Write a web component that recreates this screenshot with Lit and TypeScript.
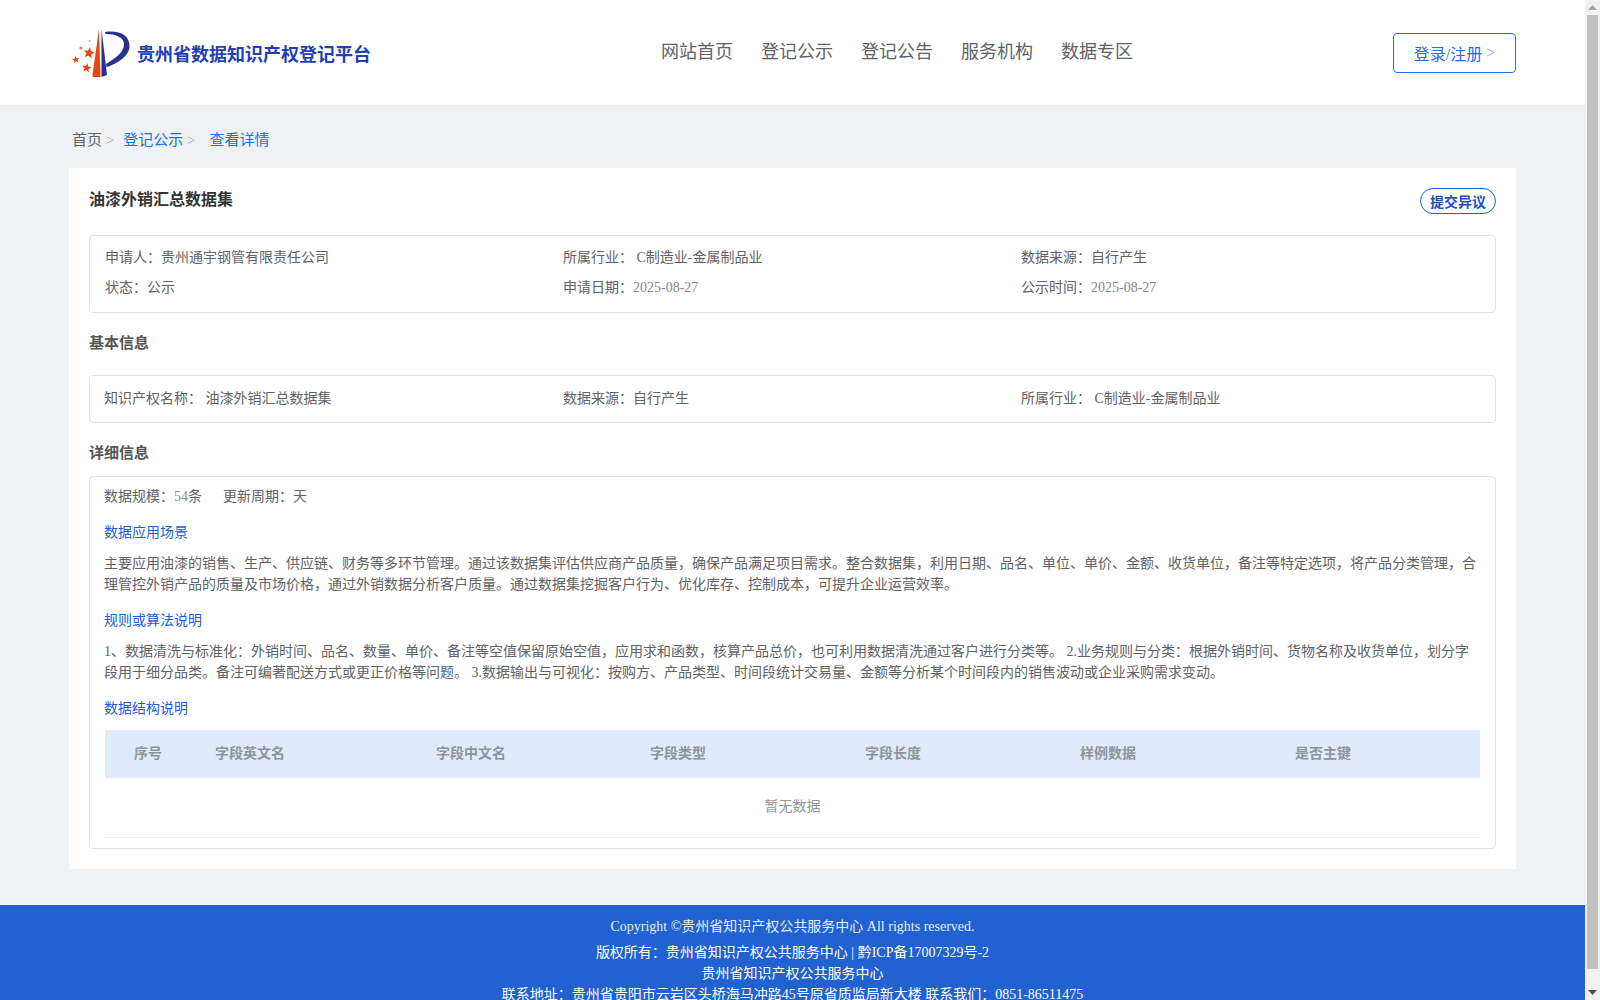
import { LitElement, html, css } from "lit";
import { customElement } from "lit/decorators.js";

const star = (cx: number, cy: number, r: number, rot = 0) => {
  const pts: string[] = [];
  for (let i = 0; i < 10; i++) {
    const rad = i % 2 === 0 ? r : r * 0.42;
    const a = (-90 + rot + i * 36) * Math.PI / 180;
    pts.push(`${(cx + rad * Math.cos(a)).toFixed(2)},${(cy + rad * Math.sin(a)).toFixed(2)}`);
  }
  return pts.join(" ");
};

@customElement("app-root")
export class AppRoot extends LitElement {
  static styles = css`
    :host { display: flex; width: 1600px; height: 1000px; overflow: hidden; font-family: "Liberation Serif", "Noto Sans CJK SC", serif; font-size: 14px; color: #606266; background: #eff2f5; }
    .page { width: 1585px; flex: none; height: 1000px; overflow: hidden; }
    .scroll { width: 15px; flex: none; background: #f1f1f1; display: flex; flex-direction: column; align-items: center; }
    .arrow { height: 15px; flex: none; display: flex; align-items: center; justify-content: center; }
    .thumb { width: 11px; height: 954px; flex: none; background: #c1c1c1; }
    .gap { flex: 1; }
    header { height: 105px; background: #fff; display: flex; align-items: center; padding: 0 69px 0 70px; }
    .brand { display: flex; align-items: center; width: 591px; flex: none; }
    .brand svg { flex: none; margin-right: 5px; }
    .brand b { font-size: 18px; color: #1f3fb3; }
    nav { display: flex; gap: 28px; font-size: 18px; color: #606266; flex: 1; margin-bottom: 5px; }
    .login { width: 123px; height: 40px; box-sizing: border-box; border: 1px solid #1f6fe5; border-radius: 4px; color: #1f6fe5; font-size: 16px; display: flex; align-items: center; justify-content: center; }
    .login .gt { margin-left: 4px; color: #7fa9f0; }
    .crumb { height: 63px; box-sizing: border-box; padding: 4px 0 0 72px; font-size: 15px; display: flex; align-items: center; }
    .crumb span.item { margin-right: 9px; }
    .crumb .gt { color: #a5adbb; }
    .crumb .b { color: #1a6fe8; }
    .crumb .b .gt { color: #7fa9f0; }
    .crumb .last { margin-left: 5px; }
    .l { color: #85878b; }
    .card { margin: 0 69px; height: 701px; box-sizing: border-box; background: #fff; padding: 20px; }
    .title { display: flex; justify-content: space-between; height: 47px; }
    .title h1 { margin: 0; padding-top: 1px; font-size: 16px; color: #333; line-height: 22px; }
    .dissent { width: 76px; height: 26px; box-sizing: border-box; border: 1px solid #1f5fd0; border-radius: 13px; font-weight: bold; color: #1e4fc0; display: flex; align-items: center; justify-content: center; }
    .box { border: 1px solid #e0e0e0; border-radius: 4px; box-sizing: border-box; }
    .info { height: 78px; padding: 5px 15px; display: grid; grid-template-columns: repeat(3, 458px); grid-auto-rows: 30px; align-items: center; }
    h2 { margin: 0; font-size: 15px; color: #555; font-weight: bold; line-height: 20px; }
    .h-a { margin-top: 20px; }
    .basic { margin-top: 22px; height: 48px; padding: 0 14px 4px; display: grid; grid-template-columns: 459px 458px 458px; align-items: center; }
    .h-b { margin-top: 20px; }
    .detail { margin-top: 13px; height: 373px; padding: 10px 14px 0; }
    .meta { line-height: 20px; display: flex; gap: 21px; }
    .sub { color: #1a5fd0; line-height: 20px; margin-top: 16px; }
    p { margin: 10px 0 0; line-height: 21px; }
    .table { margin: 11px 1px 0; }
    .thead { height: 48px; box-sizing: border-box; padding-bottom: 5px; background: #dfebfc; display: grid; grid-template-columns: 110px 221px 214px 215px 215px 215px 1fr; align-items: center; color: #909399; font-weight: bold; }
    .thead .first { padding-left: 29px; }
    .empty { height: 54px; padding-bottom: 5px; border-bottom: 1px solid #ebeef5; display: flex; align-items: center; justify-content: center; color: #909399; }
    footer { margin-top: 36px; background: #2161d0; color: #fff; text-align: center; padding-top: 11px; height: 120px; line-height: 21px; }
    footer .c { color: #e6eeff; margin-bottom: 5px; }
  `;

  render() {
    return html`
      <div class="page">
        <header>
          <div class="brand">
            <svg width="62" height="54" viewBox="70 26 62 54">
              <path d="M99 29 L100.5 77 L93 77 Q92 76 92.5 75 Z" fill="#e8450f"/>
              <path d="M101.5 29 L107 75 L101.5 77 Z" fill="#2a318c"/>
              <path d="M105 32 C118 30 130 34 129.5 47 C129 56 117 64 106.5 67 L106 64 C114 59 124 53 124 44 C124 37 115 34 105.5 34 Z" fill="#2a318c"/>
              <polygon points="${star(89, 53, 6, 10)}" fill="#e8450f"/>
              <polygon points="${star(75.8, 59.7, 3.8, -10)}" fill="#e8450f"/>
              <polygon points="${star(86.7, 68, 5, 10)}" fill="#e8450f"/>
              <circle cx="81" cy="48" r="1.6" fill="#ee7a50"/>
              <circle cx="89.5" cy="41" r="1.1" fill="#f2a080"/>
            </svg>
            <b>贵州省数据知识产权登记平台</b>
          </div>
          <nav><span>网站首页</span><span>登记公示</span><span>登记公告</span><span>服务机构</span><span>数据专区</span></nav>
          <div class="login">登录/注册<span class="gt">&gt;</span></div>
        </header>
        <div class="crumb"><span class="item">首页 <span class="gt">&gt;</span></span><span class="item b">登记公示 <span class="gt">&gt;</span></span><span class="item b last">查看详情</span></div>
        <section class="card">
          <div class="title"><h1>油漆外销汇总数据集</h1><div class="dissent">提交异议</div></div>
          <div class="box info">
            <div>申请人：贵州通宇钢管有限责任公司</div><div>所属行业： C制造业-金属制品业</div><div>数据来源：自行产生</div>
            <div>状态：公示</div><div>申请日期：<span class="l">2025-08-27</span></div><div>公示时间：<span class="l">2025-08-27</span></div>
          </div>
          <h2 class="h-a">基本信息</h2>
          <div class="box basic">
            <div>知识产权名称： 油漆外销汇总数据集</div><div>数据来源：自行产生</div><div>所属行业： C制造业-金属制品业</div>
          </div>
          <h2 class="h-b">详细信息</h2>
          <div class="box detail">
            <div class="meta"><span>数据规模：<span class="l">54</span>条</span><span>更新周期：天</span></div>
            <div class="sub">数据应用场景</div>
            <p>主要应用油漆的销售、生产、供应链、财务等多环节管理。通过该数据集评估供应商产品质量，确保产品满足项目需求。整合数据集，利用日期、品名、单位、单价、金额、收货单位，备注等特定选项，将产品分类管理，合理管控外销产品的质量及市场价格，通过外销数据分析客户质量。通过数据集挖掘客户行为、优化库存、控制成本，可提升企业运营效率。</p>
            <div class="sub">规则或算法说明</div>
            <p>1、数据清洗与标准化：外销时间、品名、数量、单价、备注等空值保留原始空值，应用求和函数，核算产品总价，也可利用数据清洗通过客户进行分类等。 2.业务规则与分类：根据外销时间、货物名称及收货单位，划分字段用于细分品类。备注可编著配送方式或更正价格等问题。 3.数据输出与可视化：按购方、产品类型、时间段统计交易量、金额等分析某个时间段内的销售波动或企业采购需求变动。</p>
            <div class="sub">数据结构说明</div>
            <div class="table">
              <div class="thead"><span class="first">序号</span><span>字段英文名</span><span>字段中文名</span><span>字段类型</span><span>字段长度</span><span>样例数据</span><span>是否主键</span></div>
              <div class="empty">暂无数据</div>
            </div>
          </div>
        </section>
        <footer>
          <div class="c">Copyright ©贵州省知识产权公共服务中心 All rights reserved.</div>
          <div>版权所有：贵州省知识产权公共服务中心 | 黔ICP备17007329号-2</div>
          <div>贵州省知识产权公共服务中心</div>
          <div>联系地址：贵州省贵阳市云岩区头桥海马冲路45号原省质监局新大楼 联系我们：0851-86511475</div>
        </footer>
      </div>
      <div class="scroll">
        <div class="arrow"><svg width="9" height="5" viewBox="0 0 9 5"><path d="M4.5 0 L9 5 L0 5 Z" fill="#a3a3a3"/></svg></div>
        <div class="thumb"></div>
        <div class="gap"></div>
        <div class="arrow"><svg width="9" height="5" viewBox="0 0 9 5"><path d="M0 0 L9 0 L4.5 5 Z" fill="#505050"/></svg></div>
      </div>
    `;
  }
}
